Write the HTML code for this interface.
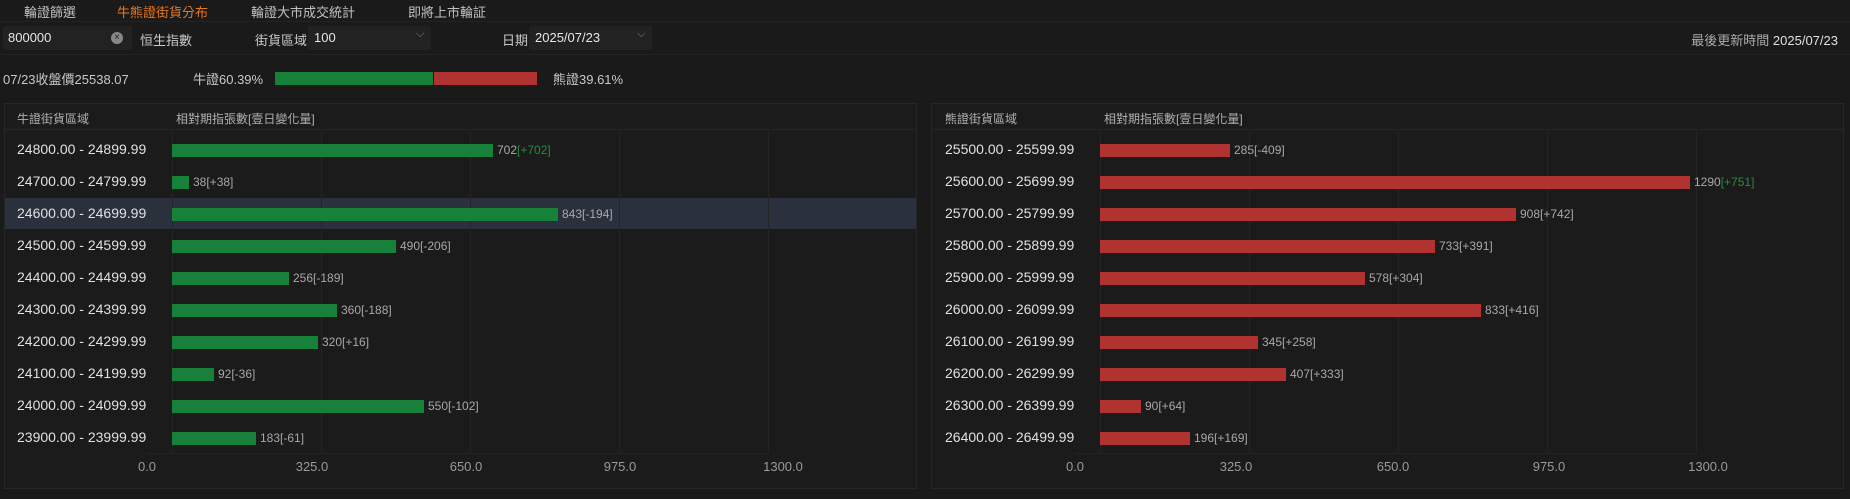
<!DOCTYPE html>
<html><head><meta charset="utf-8"><style>
*{margin:0;padding:0;box-sizing:border-box}
body{width:1850px;height:499px;background:#1a1a1a;font-family:"Liberation Sans","Noto Sans CJK TC",sans-serif;color:#c8c8c8;position:relative;overflow:hidden;font-size:13px}
.a{position:absolute;white-space:nowrap}
.box{position:absolute;background:#222;border-radius:3px}
.panel{position:absolute;top:103px;height:386px;border:1px solid #262626;background:#1b1b1b}
.bar{position:absolute;height:13px}
.g{background:#178039}.r{background:#b13331}
.lbl{font-size:14px;color:#e0e0e0}
.val{font-size:12px;color:#a8a8a8}
.grid{position:absolute;top:131px;width:1px;height:322px;background:#242424}
.ax{font-size:13px;color:#9a9a9a;transform:translateX(-50%)}
</style></head><body>
<div class="a" style="left:24px;top:2px;color:#c0c0c0">輪證篩選</div>
<div class="a" style="left:117px;top:2px;color:#e8781e">牛熊證街貨分布</div>
<div class="a" style="left:251px;top:2px;color:#c0c0c0">輪證大市成交統計</div>
<div class="a" style="left:408px;top:2px;color:#c0c0c0">即將上市輪証</div>
<div class="a" style="left:0;top:21px;width:1850px;height:1px;background:#222"></div>
<div class="box" style="left:3px;top:26px;width:129px;height:24px"></div>
<div class="a" style="left:8px;top:30px;color:#e6e6e6">800000</div>
<div class="a" style="left:111px;top:32px;width:12px;height:12px;border-radius:50%;background:#888;color:#222;font-size:10px;line-height:12px;text-align:center">×</div>
<div class="a" style="left:140px;top:30px">恒生指數</div>
<div class="a" style="left:255px;top:30px">街貨區域</div>
<div class="box" style="left:308px;top:26px;width:123px;height:24px"></div>
<div class="a" style="left:314px;top:30px;color:#e6e6e6">100</div>
<div class="a" style="left:416px;top:28px;color:#888;font-size:11px">⌵</div>
<div class="a" style="left:502px;top:30px">日期</div>
<div class="box" style="left:529px;top:26px;width:123px;height:24px"></div>
<div class="a" style="left:535px;top:30px;color:#e6e6e6">2025/07/23</div>
<div class="a" style="left:637px;top:28px;color:#888;font-size:11px">⌵</div>
<div class="a" style="right:12px;top:30px;color:#aaa">最後更新時間 <span style="color:#e0e0e0">2025/07/23</span></div>
<div class="a" style="left:0;top:54px;width:1850px;height:1px;background:#222"></div>
<div class="a" style="left:3px;top:69px">07/23收盤價25538.07</div>
<div class="a" style="left:193px;top:69px">牛證60.39%</div>
<div class="a" style="left:275px;top:72px;width:158px;height:13px;background:#178039"></div>
<div class="a" style="left:434px;top:72px;width:103px;height:13px;background:#b13331"></div>
<div class="a" style="left:553px;top:69px">熊證39.61%</div>

<div class="panel" style="left:4px;width:913px"></div>
<div class="panel" style="left:931px;width:913px"></div>
<div class="a" style="left:4px;top:129px;width:913px;height:1px;background:#262626"></div>
<div class="a" style="left:931px;top:129px;width:913px;height:1px;background:#262626"></div>
<div class="a" style="left:17px;top:110px;font-size:12px;color:#b0b0b0">牛證街貨區域</div>
<div class="a" style="left:176px;top:110px;font-size:12px;color:#b0b0b0">相對期指張數[壹日變化量]</div>
<div class="a" style="left:945px;top:110px;font-size:12px;color:#b0b0b0">熊證街貨區域</div>
<div class="a" style="left:1104px;top:110px;font-size:12px;color:#b0b0b0">相對期指張數[壹日變化量]</div>
<div class="a" style="left:5px;top:198px;width:911px;height:31px;background:#2a313c"></div>

<div class="grid" style="left:172px"></div><div class="grid" style="left:321px"></div><div class="grid" style="left:470px"></div><div class="grid" style="left:619px"></div><div class="grid" style="left:768px"></div>
<div class="grid" style="left:1100px"></div><div class="grid" style="left:1249px"></div><div class="grid" style="left:1398px"></div><div class="grid" style="left:1547px"></div><div class="grid" style="left:1696px"></div>
<div class="a" style="left:147px;top:453px;width:622px;height:1px;background:#242424"></div>
<div class="a" style="left:1075px;top:453px;width:622px;height:1px;background:#242424"></div>

<div class="a ax" style="left:147px;top:459px">0.0</div><div class="a ax" style="left:312px;top:459px">325.0</div><div class="a ax" style="left:466px;top:459px">650.0</div><div class="a ax" style="left:620px;top:459px">975.0</div><div class="a ax" style="left:783px;top:459px">1300.0</div>
<div class="a ax" style="left:1075px;top:459px">0.0</div><div class="a ax" style="left:1236px;top:459px">325.0</div><div class="a ax" style="left:1393px;top:459px">650.0</div><div class="a ax" style="left:1549px;top:459px">975.0</div><div class="a ax" style="left:1708px;top:459px">1300.0</div>

<div class="a lbl" style="left:17px;top:141px">24800.00 - 24899.99</div><div class="bar g" style="left:172px;top:144px;width:321px"></div><div class="a val" style="left:497px;top:143px">702<span style="color:#2a8a3c">[+702]</span></div>
<div class="a lbl" style="left:17px;top:173px">24700.00 - 24799.99</div><div class="bar g" style="left:172px;top:176px;width:17px"></div><div class="a val" style="left:193px;top:175px">38[+38]</div>
<div class="a lbl" style="left:17px;top:205px">24600.00 - 24699.99</div><div class="bar g" style="left:172px;top:208px;width:386px"></div><div class="a val" style="left:562px;top:207px">843[-194]</div>
<div class="a lbl" style="left:17px;top:237px">24500.00 - 24599.99</div><div class="bar g" style="left:172px;top:240px;width:224px"></div><div class="a val" style="left:400px;top:239px">490[-206]</div>
<div class="a lbl" style="left:17px;top:269px">24400.00 - 24499.99</div><div class="bar g" style="left:172px;top:272px;width:117px"></div><div class="a val" style="left:293px;top:271px">256[-189]</div>
<div class="a lbl" style="left:17px;top:301px">24300.00 - 24399.99</div><div class="bar g" style="left:172px;top:304px;width:165px"></div><div class="a val" style="left:341px;top:303px">360[-188]</div>
<div class="a lbl" style="left:17px;top:333px">24200.00 - 24299.99</div><div class="bar g" style="left:172px;top:336px;width:146px"></div><div class="a val" style="left:322px;top:335px">320[+16]</div>
<div class="a lbl" style="left:17px;top:365px">24100.00 - 24199.99</div><div class="bar g" style="left:172px;top:368px;width:42px"></div><div class="a val" style="left:218px;top:367px">92[-36]</div>
<div class="a lbl" style="left:17px;top:397px">24000.00 - 24099.99</div><div class="bar g" style="left:172px;top:400px;width:252px"></div><div class="a val" style="left:428px;top:399px">550[-102]</div>
<div class="a lbl" style="left:17px;top:429px">23900.00 - 23999.99</div><div class="bar g" style="left:172px;top:432px;width:84px"></div><div class="a val" style="left:260px;top:431px">183[-61]</div>

<div class="a lbl" style="left:945px;top:141px">25500.00 - 25599.99</div><div class="bar r" style="left:1100px;top:144px;width:130px"></div><div class="a val" style="left:1234px;top:143px">285[-409]</div>
<div class="a lbl" style="left:945px;top:173px">25600.00 - 25699.99</div><div class="bar r" style="left:1100px;top:176px;width:590px"></div><div class="a val" style="left:1694px;top:175px">1290<span style="color:#2a8a3c">[+751]</span></div>
<div class="a lbl" style="left:945px;top:205px">25700.00 - 25799.99</div><div class="bar r" style="left:1100px;top:208px;width:416px"></div><div class="a val" style="left:1520px;top:207px">908[+742]</div>
<div class="a lbl" style="left:945px;top:237px">25800.00 - 25899.99</div><div class="bar r" style="left:1100px;top:240px;width:335px"></div><div class="a val" style="left:1439px;top:239px">733[+391]</div>
<div class="a lbl" style="left:945px;top:269px">25900.00 - 25999.99</div><div class="bar r" style="left:1100px;top:272px;width:265px"></div><div class="a val" style="left:1369px;top:271px">578[+304]</div>
<div class="a lbl" style="left:945px;top:301px">26000.00 - 26099.99</div><div class="bar r" style="left:1100px;top:304px;width:381px"></div><div class="a val" style="left:1485px;top:303px">833[+416]</div>
<div class="a lbl" style="left:945px;top:333px">26100.00 - 26199.99</div><div class="bar r" style="left:1100px;top:336px;width:158px"></div><div class="a val" style="left:1262px;top:335px">345[+258]</div>
<div class="a lbl" style="left:945px;top:365px">26200.00 - 26299.99</div><div class="bar r" style="left:1100px;top:368px;width:186px"></div><div class="a val" style="left:1290px;top:367px">407[+333]</div>
<div class="a lbl" style="left:945px;top:397px">26300.00 - 26399.99</div><div class="bar r" style="left:1100px;top:400px;width:41px"></div><div class="a val" style="left:1145px;top:399px">90[+64]</div>
<div class="a lbl" style="left:945px;top:429px">26400.00 - 26499.99</div><div class="bar r" style="left:1100px;top:432px;width:90px"></div><div class="a val" style="left:1194px;top:431px">196[+169]</div>
</body></html>
